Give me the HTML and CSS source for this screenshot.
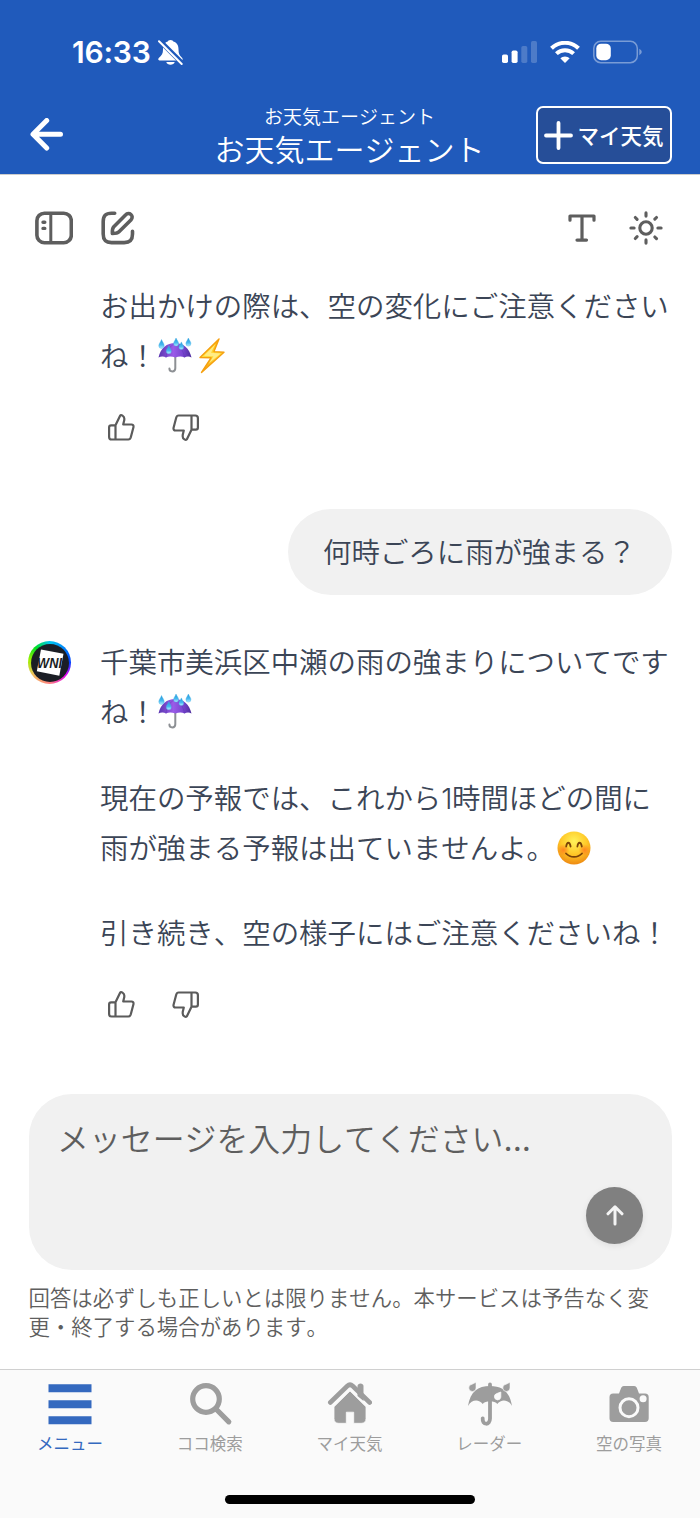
FILE: index.html
```html
<!DOCTYPE html>
<html lang="ja">
<head>
<meta charset="utf-8">
<title>お天気エージェント</title>
<link rel="stylesheet" href="styles.css">
</head>
<body>
<svg width="0" height="0" class="defs" aria-hidden="true">
  <defs>
    <linearGradient id="canopy" x1="0" x2="1"><stop offset="0" stop-color="#5a36b0"/><stop offset=".45" stop-color="#9a5be8"/><stop offset=".75" stop-color="#7745cf"/><stop offset="1" stop-color="#4c2d9b"/></linearGradient>
    <linearGradient id="drop" x1="0" y1="0" x2="0" y2="1"><stop offset="0" stop-color="#2497d8"/><stop offset=".6" stop-color="#48b9f0"/><stop offset="1" stop-color="#b9f0ff"/></linearGradient>
    <linearGradient id="bolt" x1="0" y1="0" x2="0" y2="1"><stop offset="0" stop-color="#ffb000"/><stop offset=".5" stop-color="#ffdf3c"/><stop offset="1" stop-color="#f89406"/></linearGradient>
    <radialGradient id="face" cx=".5" cy=".3" r=".7"><stop offset="0" stop-color="#fff25a"/><stop offset=".55" stop-color="#ffc928"/><stop offset="1" stop-color="#ee8a12"/></radialGradient>
    <radialGradient id="cheek"><stop offset="0" stop-color="#ff7a1e" stop-opacity=".85"/><stop offset="1" stop-color="#ff7a1e" stop-opacity="0"/></radialGradient>
    <symbol id="umbrella" viewBox="0 0 34 36">
      <path d="M17.3 18v12.300c0 4.300-5.900 4-5.900.300" fill="none" stroke="#8d9094" stroke-width="2" stroke-linecap="round"/>
      <path d="M.5 19.500C2.500 10 9 5 17 5S31.500 10 33.500 19.500c-2.200-1.500-4.700-1.500-7 0-2.500-1.500-5.500-1.500-9.200 0-3.700-1.500-6.700-1.500-9.300 0-2-1.500-5.300-1.500-7.500 0z" fill="url(#canopy)"/>
      <path d="M17 5.500C11.500 8 9 13 8 19.500M17 5.500c5 2.500 8.500 7.500 9.500 14" fill="none" stroke="#4d2aa0" stroke-opacity=".35" stroke-width=".8"/>
      <g fill="url(#drop)" stroke="#45b0e6" stroke-width=".4">
        <path d="M3.500 1.500c1 2.500 2.700 4 2.700 6.200a2.700 2.700 0 0 1-5.400 0C.8 5.500 2.800 4 3.500 1.500z"/>
        <path d="M18 0c1 2.300 2.600 3.700 2.600 5.600a2.500 2.500 0 0 1-5 0C15.600 3.600 17.300 2.300 18 0z"/>
        <path d="M30.300 0c1 2.300 2.600 3.700 2.600 5.600a2.500 2.500 0 0 1-5 0c0-2 1.700-3.300 2.400-5.600z"/>
        <path d="M10.800 7.700c1 2.300 2.500 3.700 2.500 5.500a2.500 2.500 0 0 1-5 0c0-2 1.800-3.200 2.500-5.500z"/>
        <path d="M23.300 3.900c1 2.300 2.400 3.600 2.400 5.300a2.400 2.400 0 0 1-4.800 0c0-2 1.700-3.100 2.400-5.300z"/>
      </g>
    </symbol>
    <symbol id="thumb-up" viewBox="0 0 27 27">
      <path d="M7.500 11.300 12.100 1.700c.8-1.400 4.200.2 4.200 2.900v1.500l-1.100 4.400h8.400c1.300 0 2.200 1.200 1.900 2.400l-2.700 10.400c-.4 1.400-1.200 2.200-2.400 2.200H3.700c-1.900 0-2.600-.8-2.600-2.600V13.500c0-1.400.6-2.200 2-2.200h4.400v14" fill="none" stroke="#5b5b5b" stroke-width="2.200" stroke-linejoin="round"/>
    </symbol>
  </defs>
</svg>

<div class="app">
  <header class="header">
    <div class="status">
      <div class="clock">
        <span class="time">16:33</span>
        <svg width="25" height="27" viewBox="0 0 25 27"><path d="M12.500 1c-1.700 0-2.500.8-2.700 1.600C5.800 4 5 7 5 10.500c0 4-1.200 6-4 8.300-1.200 1.200-.9 2.700.6 2.700h21.600c1.500 0 1.900-1.500.8-2.700-2.600-2.300-3.500-4.300-3.500-8.300 0-3.500-.9-6.500-5.200-7.900C15.100 1.800 14.300 1 12.500 1zM8.300 23h8.400c-.8 3.700-7.600 3.700-8.400 0z" fill="#fff"/><path d="M1.500 1.500 25 25" stroke="#205abb" stroke-width="4.800"/><path d="M1 2.300 23.700 25" stroke="#fff" stroke-width="2" stroke-linecap="round"/></svg>
      </div>
      <div class="indicators">
        <svg width="35" height="22" viewBox="0 0 35 22" fill="#fff"><rect y="13.500" width="6" height="8.500" rx="1.700"/><rect x="9.600" y="9.500" width="6" height="12.500" rx="1.700"/><g opacity=".2"><rect x="19.300" y="5" width="6" height="17" rx="1.700"/><rect x="29" width="6" height="22" rx="1.700"/></g></svg>
        <svg width="30" height="22" viewBox="0 0 30 22"><g fill="none" stroke="#fff" stroke-width="4"><path d="M1.500 7.300a19.300 19.300 0 0 1 27 0"/><path d="M6.400 12.600a12.400 12.400 0 0 1 17.200 0"/></g><path d="M15 22l-4.700-4.700a6.800 6.800 0 0 1 9.400 0z" fill="#fff"/></svg>
        <svg width="49" height="24" viewBox="0 0 49 24"><rect x=".8" y="1.300" width="43.500" height="21.400" rx="7" fill="none" stroke="#fff" stroke-opacity=".4" stroke-width="1.500"/><rect x="3.300" y="3.700" width="14.500" height="16.500" rx="4.800" fill="#fff"/><path d="M46.300 8.800q5 3.200 0 6.400z" fill="#fff" opacity=".4"/></svg>
      </div>
    </div>
    <div class="navbar">
      <svg class="back" width="34" height="34" viewBox="0 0 34 34" fill="none" stroke="#fff" stroke-width="5" stroke-linecap="round" stroke-linejoin="round"><path d="M17.700 2.500 4 16.300 17.700 30M4.500 16.300h27"/></svg>
      <div class="titles"><div class="subtitle">お天気エージェント</div><div class="title">お天気エージェント</div></div>
      <div class="my-weather">
        <svg width="29" height="29" viewBox="0 0 29 29" stroke="#fff" stroke-width="3.800" stroke-linecap="round"><path d="M14.500 2v25M2 14.500h25"/></svg>
        <span>マイ天気</span>
      </div>
    </div>
  </header>

  <div class="toolbar">
    <div class="tools tools-left">
      <svg width="38" height="34" viewBox="0 0 38 34" fill="none" stroke="#5e5e5e" stroke-width="3.600" stroke-linecap="round"><rect x="1.900" y="2.200" width="34.400" height="29.500" rx="7.500"/><path d="M15.800 2.500v29" stroke-width="3"/><path d="M8 11.200h1.800M8 17.400h1.800" stroke-width="3.400"/></svg>
      <svg width="34" height="34" viewBox="0 0 34 34" fill="none" stroke="#5e5e5e" stroke-width="3.600" stroke-linecap="round" stroke-linejoin="round"><path d="M13.700 2.300H10.500c-6 0-8.300 2.500-8.300 8.300v12.500c0 6 2.300 8.500 8.300 8.500h12.700c5.800 0 8.300-2.500 8.300-8.500v-2.900"/><path d="M11.400 22.500c-.3-4 .2-5.400 1.400-6.800L24.500 4c3.500-3.800 9.200.8 5.400 5L18 20.800c-1.700 1.700-3.500 1.700-6.600 1.700z"/></svg>
    </div>
    <div class="tools tools-right">
      <svg width="28" height="28" viewBox="0 0 28 28" fill="none" stroke="#5e5e5e" stroke-width="3.200" stroke-linecap="round" stroke-linejoin="round"><path d="M2 6.200V2h24v4.200M14 2v24M9 26.100h9.500"/></svg>
      <svg width="34" height="34" viewBox="0 0 34 34" fill="none" stroke="#5e5e5e" stroke-width="3.100" stroke-linecap="round"><circle cx="17" cy="17" r="6.200"/><path d="M17 1.900v3.200M17 28.900v3.200M1.900 17h3.200M28.900 17h3.200M6.300 6.500l1.800 1.800M25.800 26l1.700 1.700M6.300 27.500l1.800-1.800M25.800 8.200l1.700-1.700"/></svg>
    </div>
  </div>

  <main class="chat">
    <section class="reply">
      <p>お出かけの際は、空の変化にご注意ください<br>ね！<svg class="emoji" width="34" height="36"><use href="#umbrella"/></svg><svg class="emoji bolt" width="26" height="36" viewBox="0 0 26 36"><path d="M20 1 1 19.500l11 .3L2.500 34.500 25 14.200l-10-.6z" fill="url(#bolt)" stroke="#f5a010" stroke-width="1.400" stroke-linejoin="round"/><path d="M16.500 6 5 17.700l9.500.5-4.500 7 11.500-9.700-9.500-.7z" fill="#ffec85"/></svg></p>
      <div class="feedback">
        <svg width="27" height="27"><use href="#thumb-up"/></svg>
        <svg class="down" width="27" height="27"><use href="#thumb-up"/></svg>
      </div>
    </section>

    <div class="question">何時ごろに雨が強まる？</div>

    <section class="reply answer">
      <div class="avatar">
        <svg width="38" height="38" viewBox="0 0 38 38"><circle cx="19" cy="19" r="19" fill="#1b1e25"/><path d="M10 5.500 32.500 9.800 28.300 31.700 5.800 27.300z" fill="#fff"/><text x="6" y="24.300" class="logo-text" textLength="25" lengthAdjust="spacingAndGlyphs">WNI</text></svg>
      </div>
      <p>千葉市美浜区中瀬の雨の強まりについてです<br>ね！<svg class="emoji" width="34" height="36"><use href="#umbrella"/></svg></p>
      <p>現在の予報では、これから<span class="digit">1</span>時間ほどの間に<br>雨が強まる予報は出ていませんよ。<svg class="emoji smile" width="34" height="34" viewBox="0 0 34 34"><circle cx="17" cy="17" r="16.500" fill="url(#face)"/><circle cx="6.500" cy="19" r="6" fill="url(#cheek)"/><circle cx="27.500" cy="19" r="6" fill="url(#cheek)"/><g fill="none" stroke="#7a4308" stroke-width="1.800" stroke-linecap="round"><path d="M9.200 15.500c.7-5 3.500-5 4.400 0M20.400 15.500c.7-5 3.500-5 4.400 0M9 22.500c4.200 4.500 11.800 4.500 16 0"/></g></svg></p>
      <p>引き続き、空の様子にはご注意くださいね！</p>
      <div class="feedback">
        <svg width="27" height="27"><use href="#thumb-up"/></svg>
        <svg class="down" width="27" height="27"><use href="#thumb-up"/></svg>
      </div>
    </section>
  </main>

  <div class="composer">
    <div class="placeholder">メッセージを入力してください<span class="dots">...</span></div>
    <div class="send"><svg width="18" height="21" viewBox="0 0 18 21" fill="none" stroke="#f4f4f4" stroke-width="3" stroke-linecap="round" stroke-linejoin="round"><path d="M9 19V2M2 8.800 9 1.800l7 7"/></svg></div>
  </div>
  <p class="disclaimer">回答は必ずしも正しいとは限りません。本サービスは予告なく変<br>更・終了する場合があります。</p>

  <nav class="tabbar">
    <div class="tab active"><svg width="46" height="46" viewBox="0 0 46 46"><path d="M1.500 3.200h43v8h-43zM1.500 19.200h43v8h-43zM1.500 35.300h43v8h-43z" fill="#3469bf"/></svg><span>メニュー</span></div>
    <div class="tab"><svg width="46" height="46" viewBox="0 0 46 46" fill="none" stroke="#9d9d9d"><circle cx="19" cy="18" r="13.300" stroke-width="5.200"/><path d="m29.500 28.500 12.300 12.300" stroke-width="5.200" stroke-linecap="round"/></svg><span>ココ検索</span></div>
    <div class="tab"><svg width="46" height="46" viewBox="-1 0 46 46"><path d="M30.500 15V5c0-3.500 6-3.500 6 0v15z" fill="#9d9d9d"/><path d="m3.300 21.500 17-16.500q2.700-2.500 5.400 0l17 16.500" fill="none" stroke="#9d9d9d" stroke-width="4.600" stroke-linecap="round"/><path d="M23 10 39 25.800v11.700q0 4.800-4.800 4.800h-7.500V31.200h-7.400v11.100h-7.500q-4.800 0-4.800-4.800V25.800z" fill="#9d9d9d" stroke="#fafafa" stroke-width=".8"/></svg><span>マイ天気</span></div>
    <div class="tab"><svg width="46" height="46" viewBox="-1 0 46 46"><path d="M1 25C3.300 10.500 11 5 23 5s19.700 5.500 22 20c-3.800-7-11-7-14.700-2-2.200-3.800-12.400-3.800-14.600 0C12 18 4.800 18 1 25z" fill="#9d9d9d"/><path d="M23 3.500v34c0 7-8 7-7.300-.2" fill="none" stroke="#9d9d9d" stroke-width="3.800" stroke-linecap="round"/><path d="M9 1.300v5.800A3.600 3.600 0 1 1 5 3.300zM43 1.300v5.800A3.600 3.600 0 1 1 39 3.300z" fill="#9d9d9d" stroke="#fafafa" stroke-width=".6"/><path d="M33.800 11v5.300a3.200 3.200 0 1 1-4-3.700z" fill="#fafafa" stroke="#fafafa" stroke-width=".8"/></svg><span>レーダー</span></div>
    <div class="tab"><svg width="46" height="46" viewBox="0 0 46 46"><path d="M6 12.500h7l2.200-5.700Q15.900 5 17.800 5h10.400q1.900 0 2.600 1.800l2.200 5.700h6q3.700 0 3.700 3.700v21q0 3.700-3.700 3.700H7.200q-3.700 0-3.700-3.700v-21q0-3.700 3.700-3.700z" fill="#9d9d9d"/><circle cx="23" cy="26.700" r="9" fill="#9d9d9d" stroke="#fafafa" stroke-width="3"/><circle cx="37.100" cy="17.700" r="3.500" fill="#fafafa"/></svg><span>空の写真</span></div>
    <div class="home-indicator"></div>
  </nav>
</div>
</body>
</html>
```
FILE: styles.css
```css
* { box-sizing: border-box; }
body { margin: 0; background: #fff; font-family: "Noto Sans CJK JP", sans-serif; font-kerning: none; text-spacing-trim: space-all; }
svg { display: block; flex: none; }
p { margin: 0; }
.defs { position: absolute; }

.app { width: 700px; height: 1518px; display: flex; flex-direction: column; overflow: hidden; }

.header { height: 175px; background: #205abb; border-bottom: 1px solid #ccc; color: #fff; display: flex; flex-direction: column; }
.status { height: 96px; padding: 8px 58px 0 72px; display: flex; justify-content: space-between; align-items: center; }
.clock { display: flex; align-items: center; gap: 6px; }
.time { width: 80px; font: 600 30px/36px Inter, sans-serif; letter-spacing: -.2px; white-space: nowrap; }
.indicators { display: flex; align-items: center; gap: 13px; }
.navbar { height: 78px; padding: 0 28px 0 29px; display: grid; grid-template-columns: 136px 1fr 136px; align-items: center; }
.titles { text-align: center; white-space: nowrap; padding: 0 2px 5px 0; }
.subtitle { font-size: 19px; line-height: 30px; font-weight: 350; }
.title { font-size: 30px; line-height: 34px; font-weight: 350; }
.my-weather { height: 58px; border: 2px solid #fff; border-radius: 7px; background: #264e98; display: flex; align-items: center; justify-content: center; gap: 4px; font-size: 21.500px; font-weight: 500; white-space: nowrap; }
.my-weather span { padding-bottom: 2px; }

.toolbar { height: 105px; padding: 0 37px 0 34.500px; display: flex; justify-content: space-between; align-items: center; }
.tools { display: flex; align-items: center; }
.tools-left { gap: 28px; }
.tools-right { gap: 33px; }

.chat { height: 814px; padding: 0 28px 0 100px; display: flex; flex-direction: column; color: #3b4556; font-size: 28.450px; line-height: 50px; font-weight: 350; white-space: nowrap; }
.reply { display: flex; flex-direction: column; }
.reply p { height: 100px; }
.reply p:last-of-type:not(:first-of-type) { height: 50px; }
.emoji { display: inline-block; vertical-align: -7px; margin-left: 1px; }
.bolt { margin-left: 7px; }
.smile { vertical-align: -6px; margin-left: 2px; }
.digit { font-family: Inter, sans-serif; line-height: 0; letter-spacing: -.5px; }
.feedback { display: flex; gap: 37px; padding: 34px 0 0 8px; }
.down { transform: rotate(180deg); }
.question { align-self: flex-end; width: 384px; height: 86px; margin-top: 68px; padding: 17px 0 0 35px; border-radius: 43px; background: #f1f1f1; }
.answer { position: relative; margin-top: 41px; gap: 35.500px; }
.answer .feedback { padding-top: 0; margin-top: -2px; }
.avatar { position: absolute; left: -72px; top: 5px; width: 43px; height: 43px; border-radius: 50%; display: flex; align-items: center; justify-content: center; background: conic-gradient(#00c8f0, #0040ff 25%, #e000f0 35%, #ff8080 50%, #f0c060 65%, #a0f000 77%, #00e020 88%, #00c8f0); }
.logo-text { font: italic 700 14.500px "Liberation Sans", sans-serif; fill: #1b1e25; }

.composer { height: 176px; margin: 0 28.500px; padding: 18px 28.500px 0 28.500px; border-radius: 43px; background: #f1f1f1; display: flex; flex-direction: column; }
.placeholder { height: 50px; font-size: 31.900px; line-height: 50px; font-weight: 350; color: #5e5e5e; white-space: nowrap; }
.dots { font-family: Inter, sans-serif; line-height: 0; font-weight: 400; }
.send { align-self: flex-end; width: 57px; height: 57px; margin-top: 24.500px; border-radius: 50%; background: #808080; box-shadow: 0 2px 6px rgba(0,0,0,.08); display: flex; align-items: center; justify-content: center; }
.disclaimer { height: 99px; padding: 13px 28px 0 28.500px; font-size: 21.400px; line-height: 28.600px; font-weight: 350; color: #5e5e5e; white-space: nowrap; }

.tabbar { height: 149px; border-top: 1px solid #d0d0d0; background: #fafafa; display: grid; grid-template-columns: repeat(5, 139.800px); grid-template-rows: 125px 1fr; }
.tab { display: flex; flex-direction: column; align-items: center; padding-top: 11px; color: #9d9d9d; font-size: 16.500px; line-height: 24px; }
.tab span { margin-top: 4px; }
.active { color: #3469bf; }
.home-indicator { grid-column: 1 / -1; margin-left: 225px; width: 250px; height: 9px; border-radius: 5px; background: #000; }
```
